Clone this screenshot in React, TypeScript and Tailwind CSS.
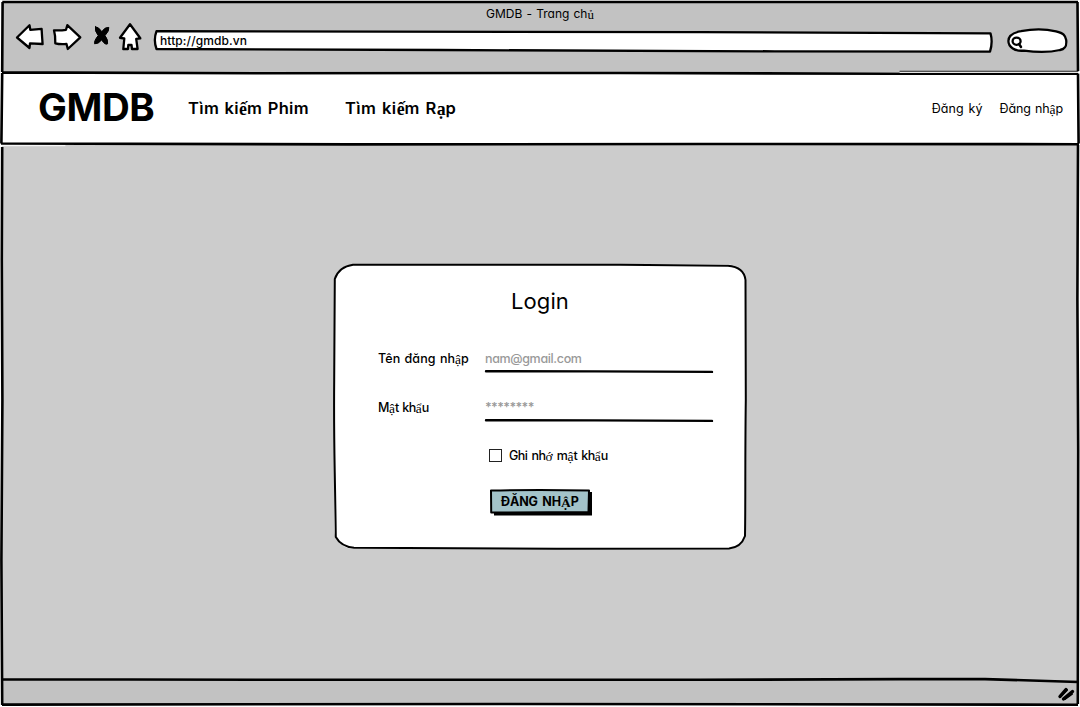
import React from "react";

const SERIF_GLYPHS = /([ếạậẩủớẬ])/;

/* Vietnamese stacked accents are set in a serif face, everything else in the rounded sans. */
function Label({ text, className = "" }: { text: string; className?: string }) {
  return (
    <span className={`block whitespace-pre ${className}`}>
      {text.split(SERIF_GLYPHS).map((part, i) =>
        SERIF_GLYPHS.test(part) ? (
          <span key={i} className="relative top-px font-['Liberation_Serif',serif] text-[1.08em] leading-none tracking-normal">
            {part}
          </span>
        ) : (
          part
        )
      )}
    </span>
  );
}

function Sketch({ box, children, className = "" }: { box: string; children: React.ReactNode; className?: string }) {
  return (
    <svg
      viewBox={box}
      className={`pointer-events-none ${className}`}
      fill="none"
      stroke="#000"
      strokeWidth="2.3"
      strokeLinecap="round"
      strokeLinejoin="round"
      aria-hidden="true"
    >
      {children}
    </svg>
  );
}

function Toolbar() {
  return (
    <div className="flex h-8 items-start pl-4">
      <Sketch box="16 22 28 32" className="h-8 w-7 shrink-0 overflow-visible">
        <path fill="#fff" d="M17 37.5 L29.5 25.2 L30.3 29.8 L41.6 28.8 Q42 36 42.6 44 L30 43.4 L29.5 48 Z" />
      </Sketch>
      <Sketch box="53 22 28 32" className="ml-[9px] h-8 w-7 shrink-0 overflow-visible">
        <path fill="#fff" d="M54 30.3 Q60 30.8 66 29.8 L67.3 25.2 L80.3 37.3 L67.8 49 L66.5 44 Q60 44.6 55.3 43.4 Q55.6 36 54 30.3 Z" />
      </Sketch>
      <Sketch box="93 22 17 32" className="ml-3 h-8 w-[17px] shrink-0 overflow-visible">
        <path
          fill="#000"
          strokeWidth="1"
          d="M95.4 26.8 Q98.4 26.6 101.8 31.6 Q104.8 27 108.8 27.4 Q109.6 30.5 105 35.6 Q108.2 39.6 107.6 43.8 Q105.2 45.4 101.6 39.9 Q98.5 44 94.6 43.8 Q93.8 41 98.2 35.6 Q94.2 30.5 95.4 26.8 Z"
        />
      </Sketch>
      <Sketch box="119 22 22 32" className="ml-[9px] h-8 w-[22px] shrink-0 overflow-visible">
        <path
          fill="#fff"
          d="M130 24.3 L120 37.8 L124.3 38.5 L123.3 49 L128 49 L128.3 45 L131.5 45 L132 49 L137.6 49 L136.2 38.8 L140.3 38.3 Z"
        />
      </Sketch>
      <div className="relative ml-[13px] mt-2 flex h-[22px] w-[839px] items-center">
        <Sketch box="154 30 839 22" className="absolute inset-0 h-full w-full overflow-visible">
          <path
            fill="#fff"
            d="M156.5 31.2 C400 31 560 31.2 700 32.2 L990.5 33.4 Q993 42 990 51.6 C800 52 650 50.4 440 50 L156.5 49 Q153.2 40 156.5 31.2 Z"
          />
        </Sketch>
        <Label
          text="http://gmdb.vn"
          className="relative -mt-px pl-[6px] text-[12px] font-medium leading-[20px] tracking-[0.1px]"
        />
      </div>
      <Sketch box="1007 28 61 26" className="ml-[14px] mt-[6px] h-[26px] w-[61px] shrink-0 overflow-visible">
        <path
          fill="#fff"
          d="M1021 31.2 C1032 29 1046 29 1056 31.4 C1064 33.4 1065 35 1066.2 40 C1066.8 46 1065.5 49 1060 50 C1048 52.8 1034 52 1024 50.6 C1015 51.6 1008.4 47 1008.4 41 C1008.4 36 1013 32.6 1021 31.2 Z"
        />
        <ellipse cx="1016.6" cy="41.2" rx="4" ry="3.6" />
        <path strokeWidth="2.5" d="M1019 44 L1021 47" />
      </Sketch>
    </div>
  );
}

function Field({ label, value, labelClass, valueClass }: { label: string; value: string; labelClass: string; valueClass: string }) {
  return (
    <div className="flex h-[49px] items-start">
      <Label text={label} className={`w-[107px] pt-px text-[12.5px] font-medium leading-5 ${labelClass}`} />
      <div className="w-[228px]">
        <Label text={value} className={`h-[21px] pt-px text-[12.5px] text-[#999] leading-5 ${valueClass}`} />
        <Sketch box="0 0 228 4" className="block h-1 w-full overflow-visible">
          <path strokeWidth="2.4" d="M1 2.3 L110 2.4 L227 2.9" />
        </Sketch>
      </div>
    </div>
  );
}

function LoginCard() {
  return (
    <section className="relative h-[285px] w-[412px] rounded-[20px] bg-white">
      <Sketch box="334 264 412 285" className="absolute inset-0 h-full w-full overflow-visible">
        <path
          strokeWidth="2"
          d="M353 264.7 C480 265 560 264 620 264.7 L728 265.7 Q744 267 745.5 280 L745.8 400 C745 460 745.6 500 745 536 Q741 547.5 729 548.4 C620 549.4 450 548.4 354 547.8 Q341 546.5 335.8 537 C334.6 450 333.6 440 334.2 380 L334.8 279 Q339 266.5 353 264.7 Z"
        />
      </Sketch>
      <div className="relative flex flex-col pl-[44px] pt-[22px]">
        <h1 className="-ml-[44px] w-[412px] text-center text-[22px] leading-[30px]">
          <Label text="Login" className="tracking-[0.1px]" />
        </h1>
        <div className="mt-[32px]">
          <Field
            label="Tên đăng nhập"
            value="nam@gmail.com"
            labelClass="tracking-[0.05px] [word-spacing:1px]"
            valueClass="font-medium tracking-[-0.35px]"
          />
          <Field
            label="Mật khẩu"
            value="********"
            labelClass="tracking-[-0.45px] [word-spacing:0.5px]"
            valueClass="font-semibold tracking-[-0.65px]"
          />
        </div>
        <div className="ml-[111px] flex h-5 items-start">
          <span className="mt-[3px] block h-[13px] w-[13px] border border-[#222] bg-white" />
          <Label
            text="Ghi nhớ mật khẩu"
            className="ml-[7px] text-[12.5px] font-medium leading-5 tracking-[-0.5px] [word-spacing:1.2px]"
          />
        </div>
        <button className="relative ml-[112px] mt-[23px] h-[27px] w-[103px] text-left">
          <Sketch box="490 489 103 27" className="absolute inset-0 h-full w-full overflow-visible">
            <path fill="#000" stroke="none" d="M494 492 L592 492 L592 515.5 L494 515.5 Z" />
            <path fill="#a3c3c9" strokeWidth="2" d="M491 490.5 Q540 489.6 589 490.5 L588.5 512 Q540 512.4 491.2 512.6 Z" />
          </Sketch>
          <Label
            text="ĐĂNG NHẬP"
            className="relative -mt-[2px] pl-[11px] text-[12.5px] font-bold leading-5 tracking-[-0.1px] [word-spacing:1.5px]"
          />
        </button>
      </div>
    </section>
  );
}

export default function App() {
  return (
    <div className="relative flex h-[707px] w-[1080px] flex-col overflow-hidden bg-white font-['Inter','Noto_Sans',sans-serif] text-black [font-feature-settings:'cv11','calt'_0]">
      <header className="mx-[2px] mt-[2px] h-[70px] shrink-0 bg-[#c2c2c2]">
        <div className="-ml-[2px] w-[1080px]">
          <Label
            text="GMDB - Trang chủ"
            className="h-5 pt-[2px] text-center text-[12px] leading-5 tracking-[-0.05px] [word-spacing:1px]"
          />
          <Toolbar />
        </div>
      </header>
      <nav className="flex h-[73px] shrink-0 items-center bg-white pl-[38px] pr-[17px]">
        <Label text="GMDB" className="-mt-[3px] w-[150px] text-[38.5px] font-bold leading-[48px] tracking-[-0.4px]" />
        <Label
          text="Tìm kiếm Phim"
          className="-mt-[2px] w-[157px] text-[16.5px] font-semibold leading-6 tracking-[0.35px] [word-spacing:1px]"
        />
        <Label
          text="Tìm kiếm Rạp"
          className="-mt-[2px] text-[16.5px] font-semibold leading-6 tracking-[0.45px] [word-spacing:1px]"
        />
        <Label text="Đăng ký" className="ml-auto text-[12.5px] leading-5 tracking-[0.1px] [word-spacing:1px]" />
        <Label text="Đăng nhập" className="ml-[17px] text-[12.5px] leading-5 tracking-[-0.15px] [word-spacing:1px]" />
      </nav>
      <main className="mx-[2px] flex h-[535px] shrink-0 justify-center bg-[#ccc] pt-[119px]">
        <LoginCard />
      </main>
      <footer className="mx-[2px] flex h-[25px] shrink-0 items-start justify-end bg-[#c2c2c2] pr-[3px] pt-[7px]">
        <Sketch box="1058 687 17 15" className="h-[15px] w-[17px] overflow-visible">
          <path strokeWidth="3.4" d="M1060 696.5 L1066 689.5 M1063.5 699 L1072.5 691.5" />
          <path strokeWidth="2" d="M1060 697 L1067 690 M1065 699 L1072 694" />
        </Sketch>
      </footer>
      <Sketch box="0 0 1080 707" className="absolute inset-0 h-[707px] w-[1080px]">
        <path
          strokeWidth="2.6"
          strokeLinecap="butt"
          d="M2.3 2 L1078 2 M2.6 2 L2.2 72 M1077.5 2 L1078 71 M2 72.4 L260 73.2 L620 73 L900 73.8 L1078 73.8 M2.2 73 L1.4 143.5 M1078 73.6 L1078.6 143.5 M1 143.5 L350 144.4 L700 144 L1079 144.2 M2.2 147 L1.8 260 L2.4 400 L1.4 560 L2.2 705 M1078 145 L1077.4 300 L1078.2 450 L1077.8 704 M2 679.2 L300 679.8 L700 679.8 L900 679.1 L985 679.1 L1078 682 M2 704.6 L500 704 L1078 704.7"
        />
        <path strokeWidth="1" d="M900 71.3 L1078 71.3" />
        <path stroke="#fff" strokeWidth="1" d="M900 72.3 L1080 72.3 M0 145.7 L65 145.7" />
      </Sketch>
    </div>
  );
}
